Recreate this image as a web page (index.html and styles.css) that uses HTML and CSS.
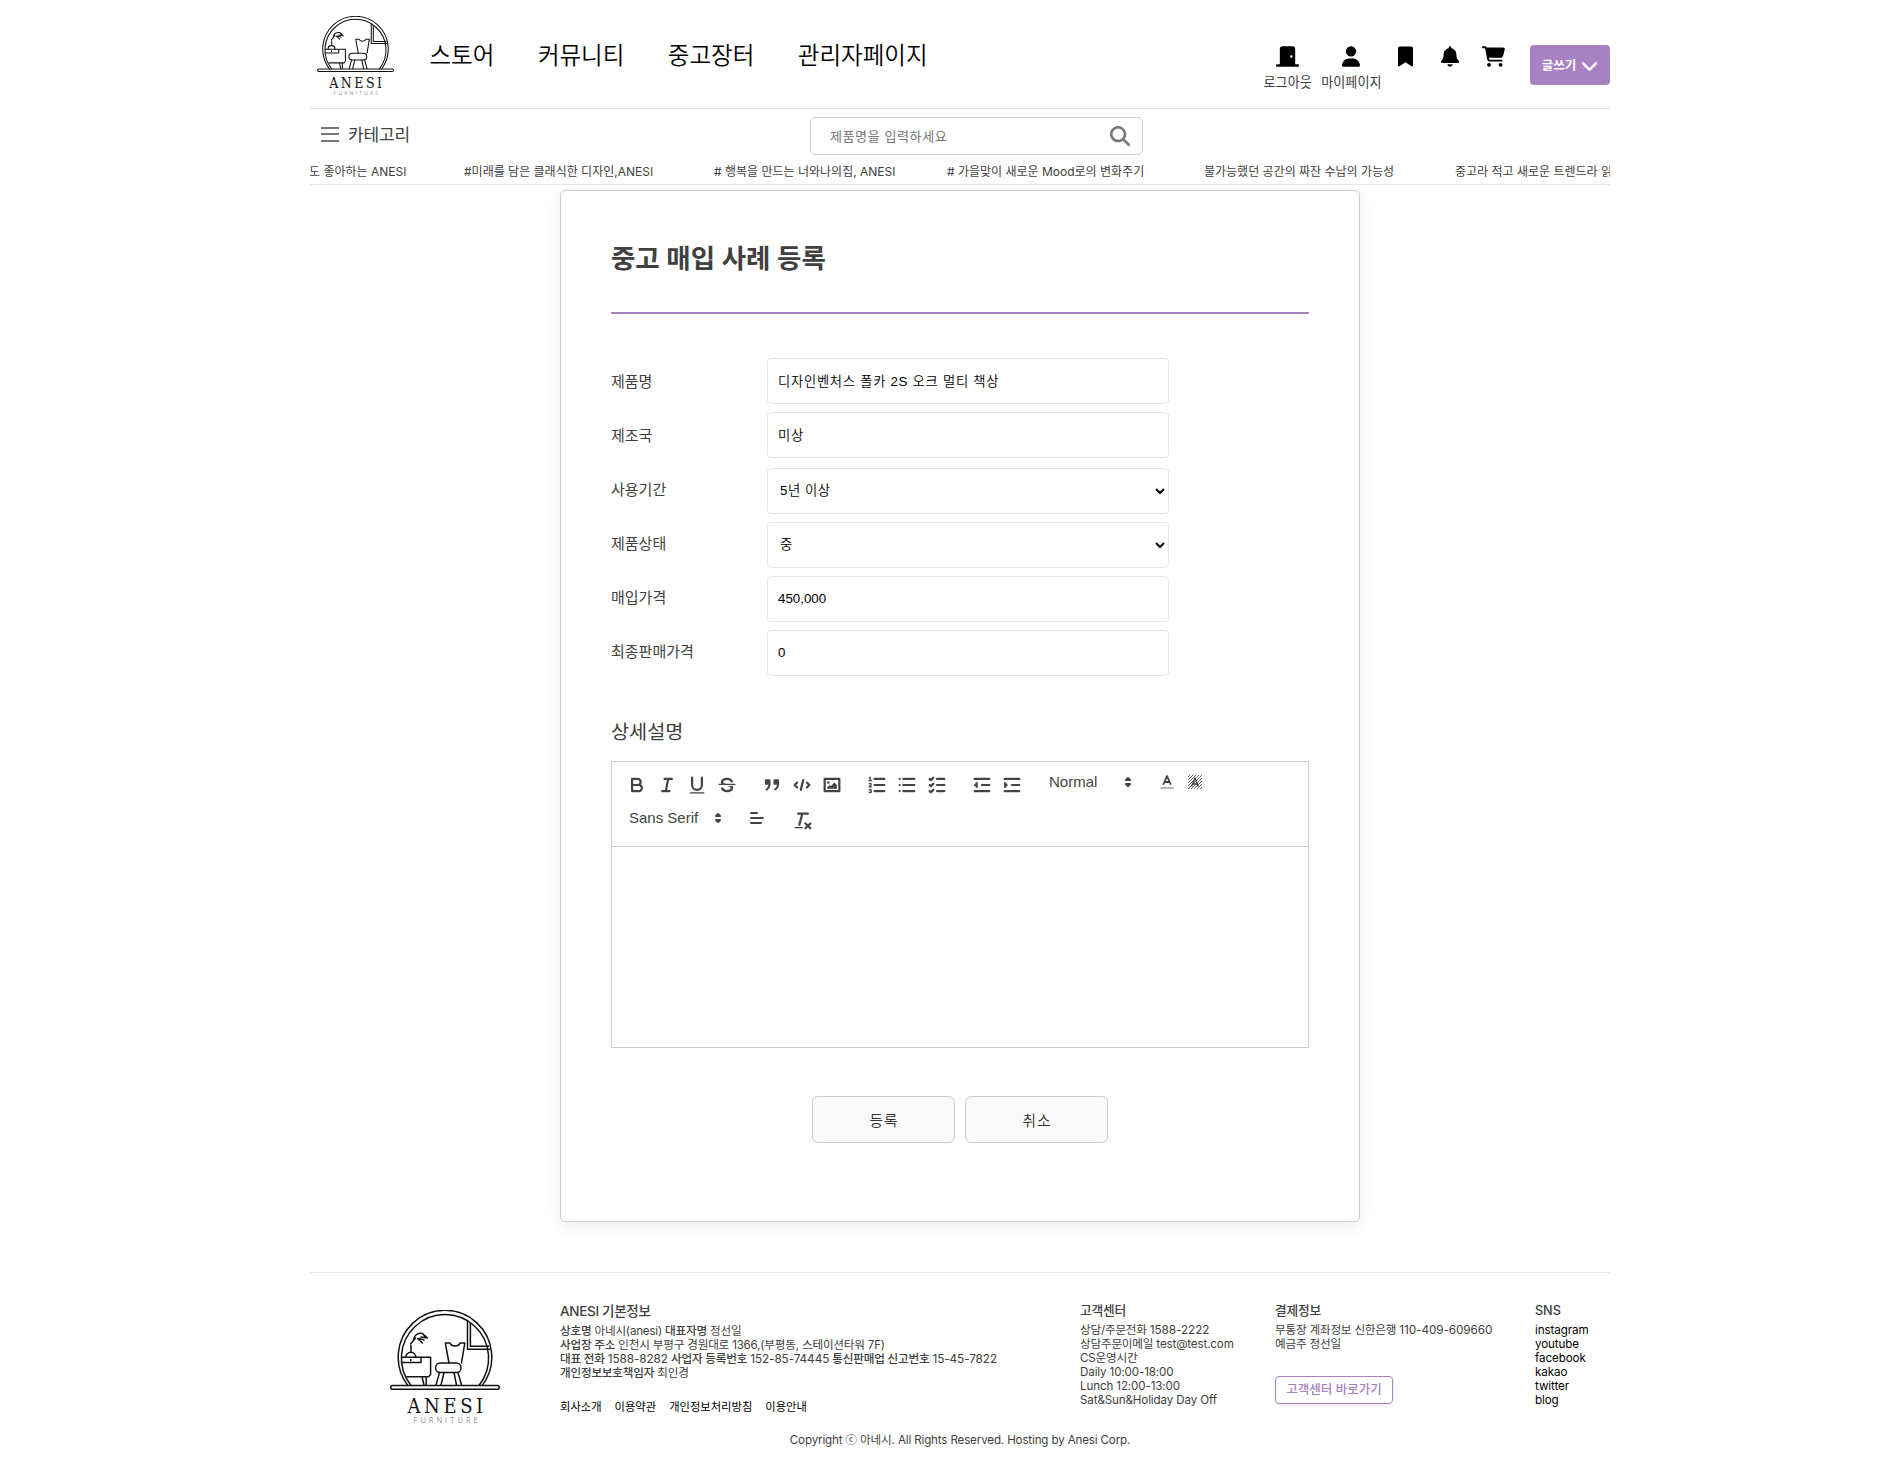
FILE: index.html
```html
<!DOCTYPE html>
<html lang="ko">
<head>
<meta charset="utf-8">
<title>ANESI</title>
<link rel="stylesheet" href="styles.css">
</head>
<body>
<div class="page">
  <header class="header">
    <svg class="logo" viewBox="0 0 110 114"><g id="logo">
      <g fill="none" stroke="#111" stroke-width="1.5" stroke-linecap="round" stroke-linejoin="round">
        <path d="M17.8 75.5A46.8 46.8 0 1 1 92.2 75.5"/>
        <path d="M21 75.5A43.6 43.6 0 1 1 89 75.5"/>
        <rect x=".8" y="75.6" width="108.4" height="3.6" rx="1.8"/>
        <path d="M77.5 10.5V39.2H100M80.4 13V36.2H99"/>
        <path d="M12 47.3H40.6V64.5L38.5 66.8H17M31 47.3V52.6H11.5M32 66.8L34 75M36.2 66.8V75M20.7 49.5V50.6"/>
        <path d="M15.8 47.2a5 5 0 0 1 10 0M21 42V35.5M20.6 34L25.5 28M23.5 29.5C24 25 28 22.8 32.5 23.5L35 26.5M27.5 28.5L32.5 33M29 28.5L34 30M31 27L37.5 28M33 24L37 27.5"/>
        <path d="M59 53L55.3 33H60Q61 36 65 36Q69 36 70 33H74.8L71.5 53"/>
        <rect x="45.6" y="53" width="25.4" height="9.6" rx="4.6"/>
        <path d="M49.5 62.6L46 75M54 62.6L51 75M64 62.6L66.5 75M68 62.6L71.5 75"/>
      </g>
      <text class="logo-name" x="17.5" y="103.3" textLength="75.5">ANESI</text>
      <text class="logo-sub" x="23.5" y="112.8" textLength="64">FURNITURE</text>
    </g></svg>
    <nav class="nav"><a>스토어</a><a>커뮤니티</a><a>중고장터</a><a>관리자페이지</a></nav>
    <div class="user-menu">
      <a class="user-item logout"><svg width="23" height="20" viewBox="0 0 576 512"><path d="M96 64c0-35.3 28.7-64 64-64H416c35.3 0 64 28.7 64 64V448h64c17.7 0 32 14.3 32 32s-14.3 32-32 32H32c-17.7 0-32-14.3-32-32s14.3-32 32-32H96V64zM384 288a32 32 0 1 0 0-64 32 32 0 1 0 0 64z"/></svg><span>로그아웃</span></a>
      <a class="user-item mypage"><svg width="18" height="20" viewBox="0 0 448 512"><path d="M224 256A128 128 0 1 0 224 0a128 128 0 1 0 0 256zm-45.7 48C79.8 304 0 383.8 0 482.3C0 498.7 13.3 512 29.7 512H418.3c16.4 0 29.7-13.3 29.7-29.7C448 383.8 368.2 304 269.7 304H178.3z"/></svg><span>마이페이지</span></a>
      <a class="user-item bookmark"><svg width="15" height="20" viewBox="0 0 384 512"><path d="M0 48V487.7C0 501.1 10.9 512 24.3 512c5 0 9.9-1.5 14-4.4L192 400 345.7 507.6c4.1 2.9 9 4.4 14 4.4c13.4 0 24.3-10.9 24.3-24.3V48c0-26.5-21.5-48-48-48H48C21.5 0 0 21.5 0 48z"/></svg></a>
      <a class="user-item bell"><svg width="18" height="20" viewBox="0 0 448 512"><path d="M224 0c-17.7 0-32 14.3-32 32V51.2C119 66 64 130.6 64 208v18.8c0 47-17.3 92.4-48.5 127.6l-7.4 8.3c-8.4 9.4-10.4 22.9-5.3 34.4S19.4 416 32 416H416c12.6 0 24-7.4 29.2-18.9s3.1-25-5.3-34.4l-7.4-8.3C401.3 319.2 384 273.9 384 226.8V208c0-77.4-55-142-128-156.8V32c0-17.7-14.3-32-32-32zm45.3 493.3c12-12 18.7-28.3 18.7-45.3H160c0 17 6.7 33.3 18.7 45.3s28.3 18.7 45.3 18.7s33.3-6.7 45.3-18.7z"/></svg></a>
      <a class="user-item cart"><svg width="23" height="20" viewBox="0 0 576 512"><path d="M0 24C0 10.7 10.7 0 24 0H69.5c22 0 41.5 12.8 50.6 32h411c26.3 0 45.5 25 38.6 50.4l-41 152.3c-8.5 31.4-37 53.3-69.5 53.3H170.7l5.4 28.5c2.2 11.3 12.1 19.5 23.6 19.5H488c13.3 0 24 10.7 24 24s-10.7 24-24 24H199.7c-34.6 0-64.3-24.6-70.7-58.5L77.4 54.5c-.7-3.8-4-6.5-7.9-6.5H24C10.7 48 0 37.3 0 24zM128 464a48 48 0 1 1 96 0 48 48 0 1 1 -96 0zm336-48a48 48 0 1 1 0 96 48 48 0 1 1 0-96z"/></svg></a>
      <a class="write"><span>글쓰기</span><svg width="17" height="17" viewBox="0 0 512 512"><path fill="#fff" stroke="#fff" stroke-width="14" d="M233.4 406.6c12.5 12.5 32.8 12.5 45.3 0l192-192c12.5-12.5 12.5-32.8 0-45.3s-32.8-12.5-45.3 0L256 338.7 86.6 169.4c-12.5-12.5-32.8-12.5-45.3 0s-12.5 32.8 0 45.3l192 192z"/></svg></a>
    </div>
  </header>
  <div class="subheader">
    <div class="category"><i class="burger"></i><span>카테고리</span></div>
    <div class="search"><span>제품명을 입력하세요</span><svg width="20" height="20" viewBox="0 0 512 512"><path fill="#777" d="M416 208c0 45.9-14.9 88.3-40 122.7L502.6 457.4c12.5 12.5 12.5 32.8 0 45.3s-32.8 12.5-45.3 0L330.7 376c-34.4 25.2-76.8 40-122.7 40C93.1 416 0 322.9 0 208S93.1 0 208 0S416 93.1 416 208zM208 352a144 144 0 1 0 0-288 144 144 0 1 0 0 288z"/></svg></div>
  </div>
  <div class="ticker">
    <span class="t1">도 좋아하는 ANESI</span><span class="t2">#미래를 담은 클래식한 디자인,ANESI</span><span class="t3"># 행복을 만드는 너와나의집, ANESI</span><span class="t4"># 가을맞이 새로운 Mood로의 변화주기</span><span class="t5">불가능했던 공간의 짜잔 수납의 가능성</span><span class="t6">중고라 적고 새로운 트렌드라 읽</span>
  </div>

  <main class="card">
    <h1 class="title">중고 매입 사례 등록</h1>
    <form class="form">
      <div class="row"><label>제품명</label><input class="field" value="디자인벤처스 폴카 2S 오크 멀티 책상"></div>
      <div class="row"><label>제조국</label><input class="field" value="미상"></div>
      <div class="row low"><label>사용기간</label><select class="field"><option>5년 이상</option></select></div>
      <div class="row low"><label>제품상태</label><select class="field"><option>중</option></select></div>
      <div class="row low"><label>매입가격</label><input class="field number" value="450,000"></div>
      <div class="row low"><label>최종판매가격</label><input class="field number" value="0"></div>
    </form>
    <h2 class="subtitle">상세설명</h2>
    <div class="editor">
      <div class="toolbar">
        <div class="tools">
          <div class="group">
            <b class="tool"><svg viewBox="0 0 18 18"><path class="s" d="M5,4H9.5A2.5,2.5,0,0,1,12,6.5v0A2.5,2.5,0,0,1,9.5,9H5A0,0,0,0,1,5,9V4Z"/><path class="s" d="M5,9h5.5A2.5,2.5,0,0,1,13,11.5v0A2.5,2.5,0,0,1,10.5,14H5V9Z"/></svg></b>
            <b class="tool"><svg viewBox="0 0 18 18"><path class="s" d="M7 4H13M5 14H11M8 14L10 4"/></svg></b>
            <b class="tool"><svg viewBox="0 0 18 18"><path class="s" d="M5,3V9a4.012,4.012,0,0,0,4,4H9a4.012,4.012,0,0,0,4-4V3"/><rect class="f" x="3" y="15" width="12" height="1" rx=".5"/></svg></b>
            <b class="tool"><svg viewBox="0 0 18 18"><path class="s thin" d="M15.5 8.5H2.5"/><path class="f" d="M9.007,8C6.542,7.791,6,7.519,6,6.5,6,5.792,7.283,5,9,5c1.571,0,2.765.679,2.969,1.309a1,1,0,0,0,1.9-.617C13.356,4.106,11.354,3,9,3,6.2,3,4,4.538,4,6.5a3.2,3.2,0,0,0,.5,1.843Z"/><path class="f" d="M8.984,10C11.457,10.208,12,10.479,12,11.5c0,0.708-1.283,1.5-3,1.5-1.571,0-2.765-.679-2.969-1.309a1,1,0,1,0-1.9.617C4.644,13.894,6.646,15,9,15c2.8,0,5-1.538,5-3.5a3.2,3.2,0,0,0-.5-1.843Z"/></svg></b>
          </div>
          <div class="group">
            <b class="tool"><svg viewBox="0 0 18 18"><rect class="f quote" x="4" y="5" width="3" height="3"/><rect class="f quote" x="11" y="5" width="3" height="3"/><path class="f quote" d="M7,8c0,4.031-3,5-3,5M14,8c0,4.031-3,5-3,5"/></svg></b>
            <b class="tool"><svg viewBox="0 0 18 18"><path class="s" d="M5 7L3 9L5 11M13 7L15 9L13 11M10 5L8 13"/></svg></b>
            <b class="tool"><svg viewBox="0 0 18 18"><rect class="s" x="3" y="4" width="12" height="10"/><circle class="f" cx="6" cy="7" r="1"/><path class="f" d="M5 12V11L7 9L8 10L11 7L13 9V12Z"/></svg></b>
          </div>
          <div class="group">
            <b class="tool"><svg viewBox="0 0 18 18"><path class="s" d="M7 4H15M7 9H15M7 14H15"/><path class="s thin" d="M2.5 5.5H4.5M3.5 5.5V2.7L2.7 3M4.5 10.5H2.5C2.5 9.7 4.3 9.3 4.3 8.4C4.3 7.7 3 7.5 2.6 8M2.5 14.8C3 15.5 4.4 15.3 4.4 14.5C4.4 13.9 3.9 13.8 3.4 13.8C3.9 13.8 4.3 13.5 4.3 13.1C4.3 12.4 3.1 12.3 2.6 12.8"/></svg></b>
            <b class="tool"><svg viewBox="0 0 18 18"><path class="s" d="M6 4H15M6 9H15M6 14H15M3 4H3M3 9H3M3 14H3"/></svg></b>
            <b class="tool"><svg viewBox="0 0 18 18"><path class="s" d="M9 4H15M9 9H15M9 14H15M3 4L4 5L6 3M3 9L4 10L6 8M3 14L4 15L6 13"/></svg></b>
          </div>
          <div class="group">
            <b class="tool"><svg viewBox="0 0 18 18"><path class="s" d="M3 14H15M3 4H15M9 9H15"/><path class="f s" d="M5 7V11L3 9Z"/></svg></b>
            <b class="tool"><svg viewBox="0 0 18 18"><path class="s" d="M3 14H15M3 4H15M9 9H15"/><path class="f s" d="M3 7V11L5 9Z"/></svg></b>
          </div>
          <div class="picker size"><span>Normal</span><svg viewBox="0 0 18 18"><path class="arrows" d="M7 11L9 13L11 11ZM7 7L9 5L11 7Z"/></svg></div>
          <div class="group colors">
            <b class="tool small"><svg viewBox="0 0 18 18"><path class="s" stroke-opacity=".4" d="M3 15H15"/><path class="s" d="M5.5 11L9 3L12.5 11M11.6 9H6.4"/></svg></b>
            <b class="tool small"><svg viewBox="0 0 18 18"><path class="hatch" d="M2 4L4 2M2 7L7 2M2 10L10 2M2 13L13 2M2 16L16 2M5 16L16 5M8 16L16 8M11 16L16 11M14 16L16 14"/><path class="s letter" d="M5.8 13L9 5L12.2 13M11.4 11H6.6"/></svg></b>
          </div>
        </div>
        <div class="tools">
          <div class="picker font"><span>Sans Serif</span><svg viewBox="0 0 18 18"><path class="arrows" d="M7 11L9 13L11 11ZM7 7L9 5L11 7Z"/></svg></div>
          <div class="group align"><b class="tool small"><svg viewBox="0 0 18 18"><path class="s" d="M3 9H15M3 14H13M3 4H9"/></svg></b></div>
          <div class="group"><b class="tool"><svg viewBox="0 0 18 18"><path class="s" d="M5 3H13M6 12L8.5 3M11 11L15 15M15 11L11 15"/><rect class="f" x="2" y="14" width="7" height="1" rx=".5"/></svg></b></div>
        </div>
      </div>
    </div>
    <div class="actions"><button>등록</button><button>취소</button></div>
  </main>

  <footer class="footer">
    <svg class="footer-logo" viewBox="0 0 110 114"><use href="#logo"/></svg>
    <div class="info">
      <h3>ANESI 기본정보</h3>
      <p><b>상호명</b> 아네시(anesi) <b>대표자명</b> 정선일</p>
      <p><b>사업장 주소</b> 인천시 부평구 경원대로 1366,(부평동, 스테이션타워 7F)</p>
      <p><b>대표 전화</b> <span class="num">1588-8282</span> <b>사업자 등록번호</b> <span class="num">152-85-74445</span> <b>통신판매업 신고번호</b> <span class="num">15-45-7822</span></p>
      <p><b>개인정보보호책임자</b> 최인경</p>
      <div class="links"><a>회사소개</a><a>이용약관</a><a>개인정보처리방침</a><a>이용안내</a></div>
    </div>
    <div class="center">
      <h4>고객센터</h4>
      <p>상담/주문전화 <span class="num">1588-2222</span></p>
      <p>상담주문이메일 <span class="latin">test@test.com</span></p>
      <p>CS운영시간</p>
      <p class="latin">Daily 10:00-18:00</p>
      <p class="latin">Lunch 12:00-13:00</p>
      <p class="latin">Sat&amp;Sun&amp;Holiday Day Off</p>
    </div>
    <div class="payment">
      <h4>결제정보</h4>
      <p>무통장 계좌정보 신한은행 <span class="num">110-409-609660</span></p>
      <p>예금주 정선일</p>
      <a class="help">고객센터 바로가기</a>
    </div>
    <div class="sns">
      <h4>SNS</h4>
      <p>instagram</p><p>youtube</p><p>facebook</p><p>kakao</p><p>twitter</p><p>blog</p>
    </div>
  </footer>
  <p class="copyright">Copyright ⓒ 아네시. All Rights Reserved. Hosting by Anesi Corp.</p>
</div>
</body>
</html>
```
FILE: styles.css
```css
* { box-sizing: border-box; margin: 0; padding: 0; }
body {
  overflow: hidden;
  background: #fff;
  color: #404040;
  font-family: Inter, "Noto Sans CJK KR", sans-serif;
}
.page { width: 1300px; height: 1457px; margin-left: 310px; }
svg { display: block; flex: none; }
.logo-name { font: 20px "DejaVu Serif Condensed", "DejaVu Serif", serif; fill: #111; }
.logo-sub { font: 300 7px Inter, sans-serif; fill: #777; }

/* header */
.header { display: flex; height: 109px; border-bottom: 1px solid #e5e5e5; }
.logo { width: 77px; height: 80px; margin: 16px 0 0 6.5px; }
.nav { display: flex; gap: 43.5px; margin: 38px 0 0 36px; line-height: 36px; font-size: 23.5px; font-weight: 350; color: #000; white-space: nowrap; }
.user-menu { display: flex; margin: 46px 0 0 auto; font-size: 13.1px; }
.user-item { display: flex; flex-direction: column; align-items: center; white-space: nowrap; }
.user-item svg { height: 21px; }
.user-item span { line-height: 18px; margin-top: 6px; }
.mypage { margin-left: 9.5px; }
.bookmark { margin-left: 16.5px; }
.bell { margin-left: 28px; }
.cart { margin-left: 23px; }
.write { display: flex; align-items: center; justify-content: center; gap: 5px; width: 80px; height: 40px; margin: -1px 0 0 25px; border-radius: 4px; background: #a881c2; color: #fff; font-size: 12.5px; font-weight: 700; white-space: nowrap; }
.write span { padding-bottom: 2px; }

.subheader { display: flex; height: 50px; }
.category { display: flex; align-items: center; gap: 9px; width: 500px; height: 50px; padding-left: 11px; font-size: 17px; letter-spacing: -.1px; }
.category span { padding-bottom: 2px; }
.burger { width: 18px; height: 15px; border-top: 2px solid #777; border-bottom: 2px solid #777; background: linear-gradient(#777, #777) 0 4.5px / 18px 2px no-repeat; }
.search { display: flex; align-items: center; justify-content: space-between; width: 333px; height: 38px; margin-top: 8px; padding: 0 12px 0 19px; border: 1px solid #ccc; border-radius: 5px; color: #757575; font-size: 13px; letter-spacing: .6px; }
.search span { padding-bottom: 2px; }
.ticker { display: flex; height: 26px; overflow: hidden; border-bottom: 1px solid #e5e5e5; line-height: 26px; font-size: 12px; letter-spacing: 0; white-space: nowrap; }
.ticker span { flex: none; }
.t1 { width: 155px; margin-left: -1px; }
.t2 { width: 250px; }
.t3 { width: 233px; }
.t4 { width: 257px; }
.t5 { width: 251px; }

/* registration card */
.card { width: 800px; height: 1032px; margin: 5px 0 0 250px; padding: 0 50px; border: 1px solid #ccc; border-radius: 5px; box-shadow: 0 5px 15px rgba(0, 0, 0, .07); background: #fff; }
.title { padding: 47px 0 34px; border-bottom: 2px solid #a881c2; line-height: 40px; font-size: 26.5px; font-weight: 600; letter-spacing: -.03px; }
.form { margin-top: 40px; }
.row { display: flex; align-items: center; height: 54px; }
.row label { width: 156px; padding-bottom: 2px; font-size: 15px; }
.field { width: 402px; height: 46px; padding: 0 10px 1px; border: 1px solid #e5e5e5; border-radius: 4px; background: #fff; color: #000; font: 350 13.33px "Liberation Sans", "Noto Sans CJK KR", sans-serif; letter-spacing: .7px; }
select.field { padding: 0 5px 1px 8px; letter-spacing: .5px; }
.field.number { padding: 0 10px 2px; letter-spacing: 0; }
.low .field { margin-top: 4px; }
.subtitle { margin: 39px 0 14px; line-height: 30px; font-size: 19.7px; font-weight: 400; }

/* rich text editor */
.editor { height: 287px; border: 1px solid #ccc; }
.toolbar { height: 85px; padding: 5px 0 0 10px; border-bottom: 1px solid #ccc; }
.tools { display: flex; align-items: center; height: 36px; }
.group { display: flex; margin-right: 15px; }
.tool { display: flex; align-items: center; justify-content: center; width: 30px; height: 36px; }
.tool svg { width: 22px; height: 22px; }
.tool.small { width: 28px; padding-bottom: 6px; }
.tool.small svg, .picker svg { width: 18px; height: 18px; }
.picker { display: flex; align-items: center; justify-content: space-between; height: 36px; padding: 0 1px 6px 7px; font: 15px "Liberation Sans", sans-serif; color: #444; }
.picker span { padding-bottom: 2px; }
.picker.size { width: 96px; margin-right: 15px; }
.picker.font { width: 106px; margin-right: 15px; }
.align { margin-right: 17px; }
.s { fill: none; stroke: #444; stroke-width: 1.8; stroke-linecap: round; stroke-linejoin: round; }
.letter { stroke-width: 1.4; }
.thin { stroke-width: 1; }
.f { fill: #444; }
.f.s { stroke-width: 1; }
.quote { stroke: #444; stroke-width: 1.6; stroke-linejoin: round; }
.arrows { fill: #444; stroke: #444; stroke-width: 2; stroke-linejoin: round; }
.hatch { fill: none; stroke: #444; stroke-width: .8; }

.actions { display: flex; justify-content: center; gap: 10px; margin-top: 48px; }
.actions button { width: 143px; height: 47px; padding: 0 0 1px 1px; border: 1px solid #ccc; border-radius: 6px; background: #f9f9f9; color: #333; font: 350 14.7px "Noto Sans CJK KR", sans-serif; letter-spacing: 1px; }

/* footer */
.footer { display: flex; height: 155px; margin-top: 50px; border-top: 1px solid #e8e8e8; font-size: 11.6px; line-height: 14px; letter-spacing: -.2px; white-space: nowrap; }
.footer b { font-weight: 500; }
.footer-logo { width: 110px; height: 114px; margin: 37px 0 0 80px; }
.info { width: 520px; margin: 28px 0 0 60px; }
.info h3 { height: 23px; line-height: 20px; font-size: 13.5px; font-weight: 500; letter-spacing: -.3px; }
.num { font-size: 11.8px; letter-spacing: -.1px; }
.links { display: flex; gap: 13px; margin-top: 20px; color: #000; font-size: 11.3px; letter-spacing: 0; }
.center, .payment, .sns { margin-top: 28px; }
.center { width: 195px; }
.payment { width: 260px; }
.footer h4 { height: 22px; line-height: 20px; font-size: 12.7px; font-weight: 500; }
.sns { letter-spacing: -.08px; }
.sns p { color: #000; }
.latin { letter-spacing: -.12px; }
.help { display: flex; align-items: center; justify-content: center; width: 118px; height: 28px; margin-top: 25px; border: 1px solid #a881c2; border-radius: 4px; box-shadow: 0 2px 4px rgba(0, 0, 0, .08); color: #a881c2; font-size: 12.5px; font-weight: 500; letter-spacing: 0; }
.copyright { margin-top: 3px; text-align: center; line-height: 20px; font-size: 11.6px; letter-spacing: -.15px; }
```
